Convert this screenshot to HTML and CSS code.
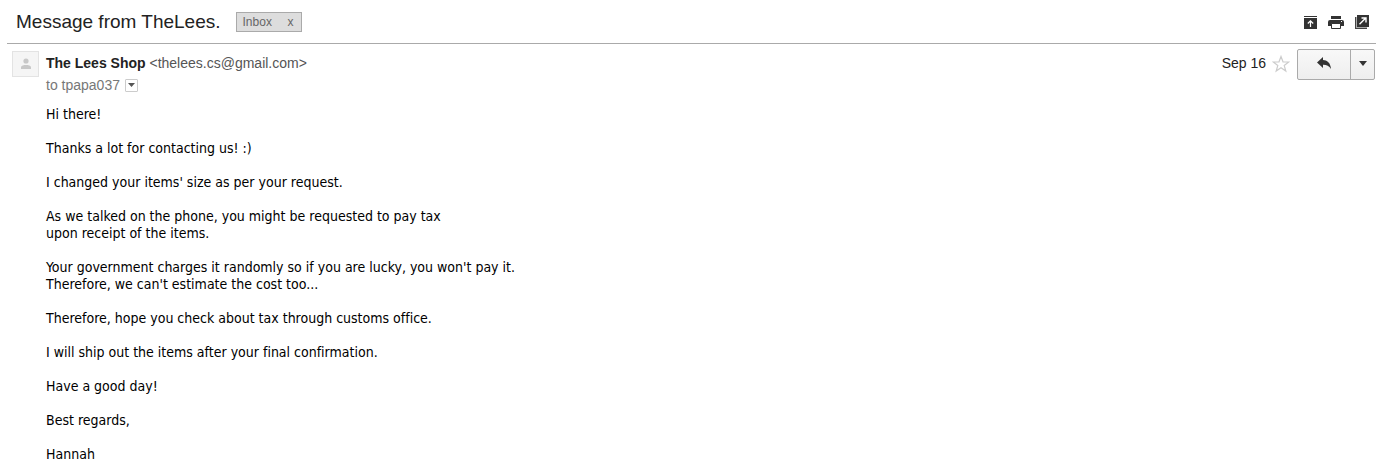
FILE: index.html
```html
<!DOCTYPE html>
<html lang="en">
<head>
<meta charset="utf-8">
<title>Message from TheLees.</title>
<link rel="stylesheet" href="styles.css">
</head>
<body>
<main class="mail">
  <header class="subject-bar">
    <h1 class="subject">Message from TheLees.</h1>
    <span class="label">Inbox <button class="label-remove" type="button" aria-label="Remove label Inbox">x</button></span>
    <nav class="tools">
      <button class="tool" type="button" aria-label="Collapse all">
        <svg width="14" height="14" viewBox="0 0 14 14"><path fill="#333" d="M1 1h13v1H1zM1 3h13v11H1z"/><path fill="none" stroke="#fff" stroke-width="1.200" d="M7.500 12V6M4.800 8.500l2.700-2.700 2.700 2.700"/></svg>
      </button>
      <button class="tool" type="button" aria-label="Print all">
        <svg width="16" height="14" viewBox="0 0 16 14"><path fill="#333" d="M3 1h10v3H3zM2 5h12a2 2 0 0 1 2 2v4h-3V9H3v2H0V7a2 2 0 0 1 2-2z"/><path fill="#fff" stroke="#333" d="M3.500 8.500h9v5h-9z"/><path fill="#fff" d="M13 6h1v1h-1z"/></svg>
      </button>
      <button class="tool" type="button" aria-label="In new window">
        <svg width="14" height="14" viewBox="0 0 14 14"><path fill="#aaa" d="M0 2h2v10h10v2H0z"/><path fill="#444" d="M0 2h1v11h11v1H0z"/><path fill="#333" d="M2 0h12v12H2z"/><path fill="none" stroke="#fff" stroke-width="1.400" d="M4.500 9.300 10.500 3.300M6.500 3h4.500v4.500"/></svg>
      </button>
    </nav>
  </header>
  <article class="message">
    <div class="avatar">
      <svg width="12" height="12" viewBox="0 0 12 12" fill="#c8c8c8"><circle cx="6" cy="3" r="2.6"/><path d="M1 11V9.500C1 7.500 4 7 6 7s5 .5 5 2.500V11z"/></svg>
    </div>
    <div class="content">
      <div class="meta">
        <div class="people">
          <div class="from"><b class="sender">The Lees Shop</b> <span class="address">&lt;thelees.cs@gmail.com&gt;</span></div>
          <div class="to">to tpapa037
            <button class="details" type="button" aria-label="Show details"><svg width="7" height="4" viewBox="0 0 7 4"><path fill="#555" d="M0 0h7L3.500 4z"/></svg></button>
          </div>
        </div>
        <div class="actions">
          <time class="date">Sep 16</time>
          <button class="star" type="button" aria-label="Star"><svg width="18" height="18" viewBox="0 0 18 18"><path fill="#fff" stroke="#ccc" stroke-width="1.200" d="m9 1.500 2 5.300 5.700.2-4.500 3.500 1.600 5.500L9 12.800 4.200 16l1.600-5.500L1.300 7 7 6.800z"/></svg></button>
          <div class="reply-group">
            <button class="reply" type="button" aria-label="Reply"><svg width="14" height="12" viewBox="0 0 14 12"><path fill="#333" d="M6 0v3c4 .2 7.500 2.500 8 9C12 8.800 9.500 7.600 6 7.700V11L0 5.500z"/></svg></button>
            <button class="more" type="button" aria-label="More"><svg width="8" height="5" viewBox="0 0 8 5"><path fill="#333" d="M0 0h8L4 5z"/></svg></button>
          </div>
        </div>
      </div>
      <div class="body">
        <p>Hi there!</p>
        <p>Thanks a lot for contacting us! :)</p>
        <p>I changed your items' size as per your request.</p>
        <p>As we talked on the phone, you might be requested to pay tax<br>upon receipt of the items.</p>
        <p>Your government charges it randomly so if you are lucky, you won't pay it.<br>Therefore, we can't estimate the cost too...</p>
        <p>Therefore, hope you check about tax through customs office.</p>
        <p>I will ship out the items after your final confirmation.</p>
        <p>Have a good day!</p>
        <p>Best regards,</p>
        <p>Hannah</p>
      </div>
    </div>
  </article>
</main>
</body>
</html>
```
FILE: styles.css
```css
* { box-sizing: border-box; }
body { margin: 0; background: #fff; color: #222; font-family: "Liberation Sans", Arial, sans-serif; }
button { margin: 0; padding: 0; border: 0; background: none; font: inherit; color: inherit; }
svg { display: block; }
.mail { padding: 0 12px 0 7px; }
.subject-bar { display: flex; align-items: center; height: 44px; padding: 1px 7px 0 9px; border-bottom: 1px solid #aaa; }
.subject { margin: 0; font-size: 19px; font-weight: 400; line-height: 24px; }
.label { display: flex; align-items: center; justify-content: space-between; width: 66px; height: 20px; margin-left: 15px; padding: 0 7px 0 6px; border: 1px solid #aaa; background: #ddd; color: #666; font-size: 12px; }
.tools { display: flex; align-items: center; gap: 11px; margin-left: auto; }
.message { display: flex; gap: 7px; padding: 7px 0 0 5px; }
.avatar { display: flex; flex: none; align-items: center; justify-content: center; width: 27px; height: 26px; border: 1px solid #e3e3e3; background: #f5f5f5; }
.content { flex: 1; }
.meta { display: flex; justify-content: space-between; }
.from { font-size: 14px; line-height: 24px; }
.address { color: #555; }
.to { display: flex; align-items: center; gap: 5px; color: #777; font-size: 14px; line-height: 20px; }
.details { display: flex; align-items: center; justify-content: center; width: 13px; height: 13px; border: 1px solid #ccc; border-radius: 1px; }
.actions { display: flex; align-items: flex-start; }
.date { font-size: 14px; line-height: 24px; }
.star { margin: 4px 7px 0 6px; }
.reply-group { display: flex; height: 31px; margin: -2px 1px 0 0; border: 1px solid #aaa; border-radius: 2px; background: linear-gradient(#f8f8f8, #eee); }
.reply, .more { display: flex; align-items: center; justify-content: center; width: 52px; padding-bottom: 3px; }
.more { width: 24px; border-left: 1px solid #aaa; }
.body { padding-top: 11px; color: #000; font-family: "DejaVu Sans Condensed", Tahoma, sans-serif; font-size: 14px; font-variant-ligatures: none; line-height: 17px; }
.body p { margin: 0 0 17px; }
.body p:last-child { margin-bottom: 0; }
```
